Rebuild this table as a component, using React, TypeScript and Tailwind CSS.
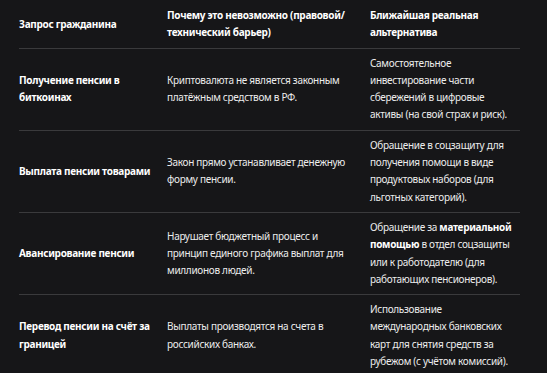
import React from 'react';

type Row = { ask: string; why: string; alt: React.ReactNode };

const rows: Row[] = [
  {
    ask: 'Получение пенсии в биткоинах',
    why: 'Криптовалюта не является законным платёжным средством в РФ.',
    alt: 'Самостоятельное инвестирование части сбережений в цифровые активы (на свой страх и риск).',
  },
  {
    ask: 'Выплата пенсии товарами',
    why: 'Закон прямо устанавливает денежную форму пенсии.',
    alt: 'Обращение в соцзащиту для получения помощи в виде продуктовых наборов (для льготных категорий).',
  },
  {
    ask: 'Авансирование пенсии',
    why: 'Нарушает бюджетный процесс и принцип единого графика выплат для миллионов людей.',
    alt: (
      <>
        Обращение за <strong className="font-bold text-white">материальной помощью</strong> в отдел
        соцзащиты или к работодателю (для работающих пенсионеров).
      </>
    ),
  },
  {
    ask: 'Перевод пенсии на счёт за границей',
    why: 'Выплаты производятся на счета в российских банках.',
    alt: 'Использование международных банковских карт для снятия средств за рубежом (с учётом комиссий).',
  },
];

export default function App() {
  return (
    <div
      className="w-[547px] h-[373px] overflow-hidden bg-[#161618] text-[#ececec] pl-[19px] pt-[1px]"
      style={{ fontFamily: '"Noto Sans", "DejaVu Sans", sans-serif' }}
    >
      <table className="w-[501px] table-fixed border-collapse text-[10px] leading-[17.3px] tracking-[-0.3px]">
        <colgroup>
          <col className="w-[148px]" />
          <col className="w-[203px]" />
          <col className="w-[150px]" />
        </colgroup>
        <thead>
          <tr className="border-b border-[#3a3a3c]">
            <th className="py-[6px] pr-3 text-left align-middle font-bold text-white">Запрос гражданина</th>
            <th className="py-[6px] pr-3 text-left align-middle font-bold text-white">
              Почему это невозможно (правовой/ технический барьер)
            </th>
            <th className="py-[6px] pr-[6px] text-left align-middle font-bold text-white">Ближайшая реальная альтернатива</th>
          </tr>
        </thead>
        <tbody>
          {rows.map((r, i) => (
            <tr key={i} className="border-b border-[#3a3a3c]">
              <td className="py-[6px] pr-3 align-middle font-bold text-white">{r.ask}</td>
              <td className="py-[6px] pr-3 align-middle">{r.why}</td>
              <td className="py-[6px] pr-[6px] align-middle">{r.alt}</td>
            </tr>
          ))}
        </tbody>
      </table>
    </div>
  );
}
